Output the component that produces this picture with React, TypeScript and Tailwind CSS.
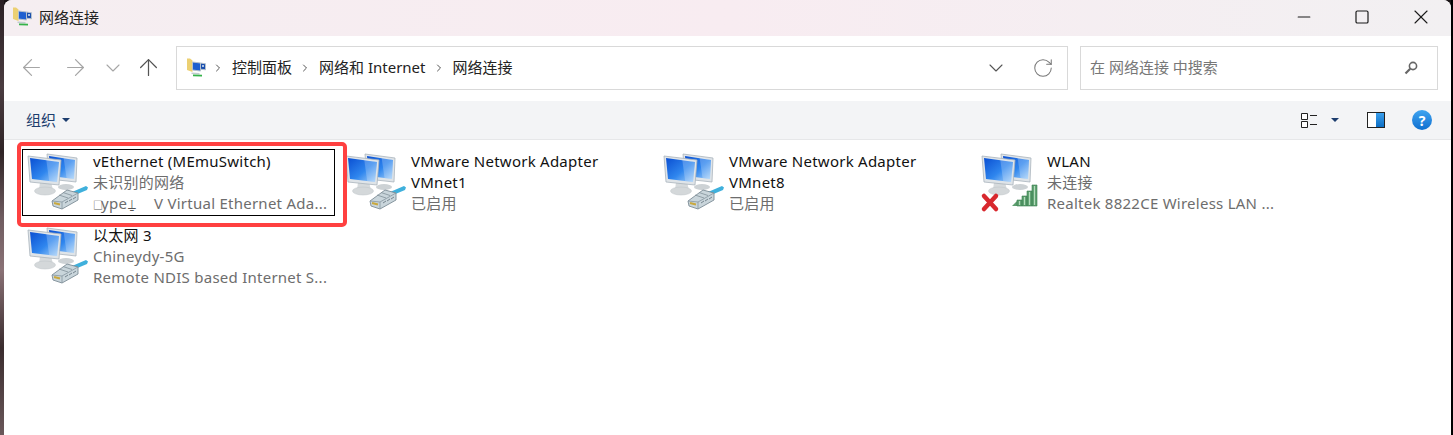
import type { ReactNode } from 'react'
import { ArrowLeft, ArrowRight, ArrowUp, ChevronDown, ChevronRight, Minus, RotateCw, Square, X } from 'lucide-react'

const FONT = "font-['Noto_Sans','Noto_Sans_CJK_SC',sans-serif]"

function FolderNet() {
  return (
    <svg width="20" height="20" viewBox="0 0 20 20" className="shrink-0">
      <path d="M0 .5h3l2.500 2V14L0 12z" fill="#ecd072" />
      <path d="M5.500 4l8 1v8l-8-1z" fill="#1d5fd0" stroke="#b4c0cc" />
      <path d="M13.500 5l5 .8v6l-5-.6z" fill="#1a4fae" stroke="#b4c0cc" />
      <circle cx="16" cy="8" r="1" fill="#dbe8fa" />
      <path d="M4.500 14.500l8 .5v1.500l-8-.5z" fill="#c3ccd0" />
      <path d="M6 16.500l9 .3v1.700l-9-.3z" fill="#35b34a" />
    </svg>
  )
}

function Monitor({ tl, tr, br, bl, id }: { tl: number[]; tr: number[]; br: number[]; bl: number[]; id: string }) {
  const pts = (a: number[][]) => a.map((p) => p.join(',')).join(' ')
  const inner = [
    [tl[0] + 2, tl[1] + 2],
    [tr[0] - 2, tr[1] + 2],
    [br[0] - 2, br[1] - 3],
    [bl[0] + 2, bl[1] - 3],
  ]
  const midX = tl[0] + (tr[0] - tl[0]) * 0.55
  return (
    <g>
      <polygon points={pts([tl, tr, br, bl])} fill="#dfe4e8" stroke="#aab4bc" strokeWidth="0.8" strokeLinejoin="round" />
      <polygon points={pts(inner)} fill={`url(#${id})`} />
      <polygon points={pts([[midX, inner[0][1] + 1], inner[1], inner[2], [midX + 3, inner[2][1] - 1]])} fill="#fff" opacity="0.22" />
    </g>
  )
}

function Plug() {
  return (
    <g>
      <path d="M47 41l14-6 2 1.500-1 2.500-12 5z" fill="#3fb0dc" />
      <path d="M27 50l15-11 11 3v7l-16 9-9-3z" fill="#c9d5db" stroke="#7d8c96" strokeWidth="0.9" strokeLinejoin="round" />
      <path d="M37 58v-7l16-9M27 50l10 1" fill="none" stroke="#8795a0" strokeWidth="0.8" />
      <path d="M34 44l9 3M38 41.500l9 3" stroke="#8a98a2" strokeWidth="0.9" />
      <path d="M40 52l3-2M44 50l3-2M48 48l3-2" stroke="#76858f" strokeWidth="1" />
      <path d="M29 52l6 1.500" stroke="#c9a83e" strokeWidth="2" />
    </g>
  )
}

function NetIcon({ wifi = false, uid }: { wifi?: boolean; uid: string }) {
  return (
    <svg width="68" height="64" viewBox="0 0 68 64" className="shrink-0">
      <defs>
        <linearGradient id={uid} x1="0" y1="0" x2="1" y2="1">
          <stop offset="0" stopColor="#0a4fd2" />
          <stop offset="0.55" stopColor="#2f86ee" />
          <stop offset="1" stopColor="#a9d2f8" />
        </linearGradient>
      </defs>
      <ellipse cx="41" cy="36" rx="8" ry="3" fill="#cdd2d5" />
      <Monitor tl={[22, 3]} tr={[52, 7]} br={[51, 31]} bl={[24, 28]} id={uid} />
      <path d="M15 31h11l2 8H14z" fill="#d6dadc" />
      <ellipse cx="20" cy="40" rx="10.500" ry="4" fill="#d4d8da" stroke="#bcc2c6" strokeWidth="0.5" />
      <Monitor tl={[3, 5]} tr={[36, 9]} br={[34, 34]} bl={[5, 31]} id={uid} />
      {wifi ? (
        <g>
          <path d="M5 45l12 13M17 45L5 58" stroke="#d8282e" strokeWidth="4.500" strokeLinecap="round" />
          <path d="M33 55l5-5v5z" fill="#5e9f70" />
          <path d="M38 49h5v6h-5zM43 45h5v10h-5zM48 40h5v15h-5zM53 34h5v21h-5z" fill="#5c9f6e" stroke="#3c8152" strokeWidth="0.6" />
          <path d="M40.500 50v4M45.500 46v8M50.500 41v13M55.500 35v19" stroke="#b4dcbc" strokeWidth="1.200" />
        </g>
      ) : (
        <Plug />
      )}
    </svg>
  )
}

type Tile = { title: string[]; lines: ReactNode[]; wifi?: boolean }

const garbled = (
  <span className="flex items-baseline">
    <span className="w-[8px] text-[10px] leading-none text-[#555]">□</span>
    <span>ype</span>
    <span className="ml-[1px] w-[11px] text-[13px] leading-none text-[#555]">⍊</span>
    <span className="ml-[15px]">V Virtual Ethernet Ada...</span>
  </span>
)

const row1: Tile[] = [
  { title: ['vEthernet (MEmuSwitch)'], lines: ['未识别的网络', garbled] },
  { title: ['VMware Network Adapter', 'VMnet1'], lines: ['已启用'] },
  { title: ['VMware Network Adapter', 'VMnet8'], lines: ['已启用'] },
  { title: ['WLAN'], lines: ['未连接', 'Realtek 8822CE Wireless LAN ...'], wifi: true },
]

const row2: Tile = { title: ['以太网 3'], lines: ['Chineydy-5G', 'Remote NDIS based Internet S...'] }

function TileItem({ tile, uid, selected }: { tile: Tile; uid: string; selected?: boolean }) {
  return (
    <div className={`flex h-[67px] w-[313px] items-center pl-[2px] ${selected ? 'border border-black' : 'border border-transparent'}`}>
      <NetIcon wifi={tile.wifi} uid={uid} />
      <div className="flex min-w-0 flex-col whitespace-pre text-[15px] leading-[21px] tracking-[0.25px]">
        {tile.title.map((t) => (
          <span key={t} className="text-[#111]">{t}</span>
        ))}
        {tile.lines.map((t, i) => (
          <span key={i} className="text-[#6d6d6d]">{t}</span>
        ))}
      </div>
    </div>
  )
}

export default function App() {
  return (
    <div className={`${FONT} relative flex h-[435px] w-[1453px] overflow-hidden bg-[#1a1416]`}>
      <div className="w-[4px] shrink-0 bg-[linear-gradient(180deg,#2a2024_0%,#4a3c40_20%,#2f2426_35%,#6f5c60_50%,#8a7276_62%,#3a2c2e_80%,#6a585a_100%)]" />
      <div className="flex min-w-0 flex-1 flex-col overflow-hidden rounded-t-[8px] bg-white">
        <div className="flex h-[36px] shrink-0 items-center bg-gradient-to-r from-[#f5eef1] via-[#f8ecf1] to-[#f2f0f2] pb-[2px] pl-[9px]">
          <FolderNet />
          <span className="ml-[6px] text-[15px] text-[#222]">网络连接</span>
          <div className="ml-auto flex items-center text-[#1a1a1a]">
            <div className="flex w-[58px] justify-center"><Minus size={20} strokeWidth={1.3} /></div>
            <div className="flex w-[58px] justify-center"><Square size={16} strokeWidth={1.8} /></div>
            <div className="flex w-[60px] justify-center"><X size={24} strokeWidth={1.1} /></div>
          </div>
        </div>

        <div className="flex h-[65px] shrink-0 items-center bg-white pb-[2px] pl-[14px] pr-[13px]">
          <ArrowLeft size={27} strokeWidth={1.1} className="shrink-0 text-[#a6a6a6]" />
          <ArrowRight size={27} strokeWidth={1.1} className="ml-[17px] shrink-0 text-[#a6a6a6]" />
          <ChevronDown size={24} strokeWidth={1.1} className="ml-[12px] shrink-0 text-[#a6a6a6]" />
          <ArrowUp size={27} strokeWidth={1.1} className="ml-[10px] shrink-0 text-[#555]" />
          <div className="ml-[14px] flex h-[44px] flex-1 items-center border border-[#d9d9d9] pl-[10px] text-[15px] text-[#222]">
            <FolderNet />
            <ChevronRight size={12} className="ml-[5px] text-[#555]" />
            <span className="ml-[8px]">控制面板</span>
            <ChevronRight size={12} className="ml-[7px] text-[#555]" />
            <span className="ml-[8px]">网络和 Internet</span>
            <ChevronRight size={12} className="ml-[7px] text-[#555]" />
            <span className="ml-[8px]">网络连接</span>
            <ChevronDown size={24} strokeWidth={1.1} className="ml-auto text-[#555]" />
            <RotateCw size={22} strokeWidth={1.1} className="ml-[24px] mr-[13px] text-[#777]" />
          </div>
          <div className="ml-[12px] flex h-[44px] w-[358px] shrink-0 items-center border border-[#d9d9d9] pl-[9px] pr-[18px] text-[15px] text-[#777]">
            <span>在 网络连接 中搜索</span>
            <svg width="16" height="16" viewBox="0 0 16 16" className="ml-auto" fill="none" stroke="#666">
              <circle cx="10" cy="6" r="3.6" strokeWidth="1.6" />
              <path d="M7.2 8.8L2.5 13.5" strokeWidth="2.2" />
            </svg>
          </div>
        </div>

        <div className="flex h-[39px] shrink-0 items-center border-b border-[#e6e7e9] bg-[#f3f4f6] pl-[22px] pr-[19px]">
          <span className="text-[15px] text-[#1c3d6e]">组织</span>
          <div className="ml-[6px] h-0 w-0 border-x-[4px] border-t-[4px] border-x-transparent border-t-[#1c3d6e]" />
          <svg width="18" height="17" viewBox="0 0 18 17" className="ml-auto" fill="none" stroke="#222">
            <path d="M1.500 1.500h6v6h-6zM1.500 9.500h6v6h-6z" fill="#fff" />
            <path d="M10 3.500h7M10 12.500h7" />
          </svg>
          <div className="ml-[13px] h-0 w-0 border-x-[4px] border-t-[4px] border-x-transparent border-t-[#1c3d6e]" />
          <div className="ml-[28px] flex h-[16px] w-[18px] border border-[#222]">
            <div className="flex-1 bg-white" />
            <div className="w-[8px] bg-gradient-to-b from-[#3aa0ee] to-[#0b6fc4]" />
          </div>
          <div className="ml-[27px] flex h-[20px] w-[20px] items-center justify-center rounded-full bg-gradient-to-b from-[#3fa4f0] to-[#0c6fd0] text-[14px] font-bold text-white">?</div>
        </div>

        <div className="flex flex-1 flex-col pl-[18px] pt-[9px]">
          <div className="grid grid-cols-[repeat(4,318px)]">
            {row1.map((t, i) => (
              <TileItem key={i} tile={t} uid={`scr${i}`} selected={i === 0} />
            ))}
          </div>
          <div className="mt-[7px]">
            <TileItem tile={row2} uid="scr4" />
          </div>
        </div>
      </div>
      <div className="w-[2px] shrink-0 bg-black" />

      <div className="absolute left-[17px] top-[142px] h-[85px] w-[330px] rounded-[5px] border-[4px] border-[#ff4040]" />
    </div>
  )
}
